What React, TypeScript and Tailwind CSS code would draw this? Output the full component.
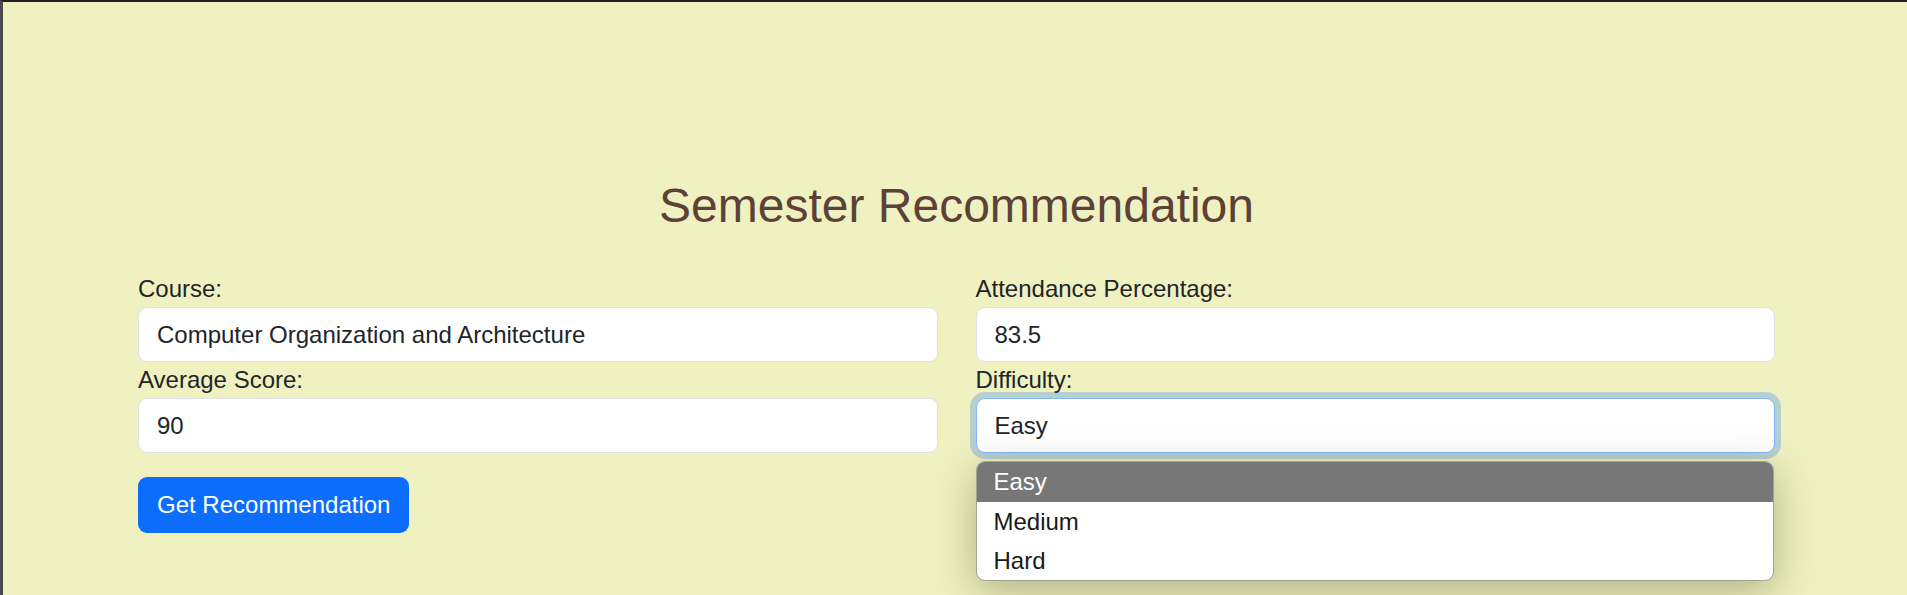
import React from "react";

const FONT = { fontFamily: '"Liberation Sans", Arial, sans-serif' };

const OPTIONS = ["Easy", "Medium", "Hard"];

function Field({ label, value }: { label: string; value: string }) {
  return (
    <div className="flex flex-col">
      <label className="text-[24px] leading-[36px] text-[#212529]">{label}</label>
      <div className="h-[55px] flex items-center px-[18px] bg-white border border-[#dee2e6] rounded-[9px] text-[24px] text-[#212529]">
        {value}
      </div>
    </div>
  );
}

function DifficultySelect() {
  return (
    <div className="flex flex-col">
      <label className="text-[24px] leading-[36px] text-[#212529]">Difficulty:</label>
      <div className="relative">
        <div className="h-[55px] flex items-center px-[18px] bg-white border border-[#86b7fe] rounded-[9px] shadow-[0_0_0_6px_rgba(13,110,253,0.25)] text-[24px] text-[#212529]">
          Easy
        </div>
        {/* open native list */}
        <ul className="absolute left-0 top-[63px] w-[798px] bg-white border border-[#a2a295] rounded-[9px] overflow-hidden shadow-[0_10px_40px_rgba(60,60,20,0.35)] z-10">
          {OPTIONS.map((o, i) => (
            <li
              key={o}
              className={
                i === 0
                  ? "h-[40px] flex items-center px-[17px] text-[24px] bg-[#777777] text-white"
                  : "h-[39px] flex items-center px-[17px] text-[24px] text-[#1a1a1a]"
              }
            >
              {o}
            </li>
          ))}
        </ul>
      </div>
    </div>
  );
}

export default function App() {
  return (
    <div
      className="h-[595px] overflow-hidden bg-[#eff1c0] border-t-2 border-t-[#202124] border-l-[3px] border-l-[#4a4a4a]"
      style={FONT}
    >
      <div className="w-[1637px] ml-[135px] pt-[174px]">
        <h1 className="text-center text-[48px] leading-[60px] text-[#5d4037] mb-[35px]">
          Semester Recommendation
        </h1>
        <div className="grid grid-cols-2 gap-x-[38px]">
          <div className="flex flex-col">
            <Field label="Course:" value="Computer Organization and Architecture" />
            <Field label="Average Score:" value="90" />
            <div className="mt-[24px]">
              <button
                type="button"
                className="h-[56px] px-[19px] bg-[#0d6efd] text-white text-[24px] rounded-[9px]"
              >
                Get Recommendation
              </button>
            </div>
          </div>
          <div className="flex flex-col">
            <Field label="Attendance Percentage:" value="83.5" />
            <DifficultySelect />
          </div>
        </div>
      </div>
    </div>
  );
}
